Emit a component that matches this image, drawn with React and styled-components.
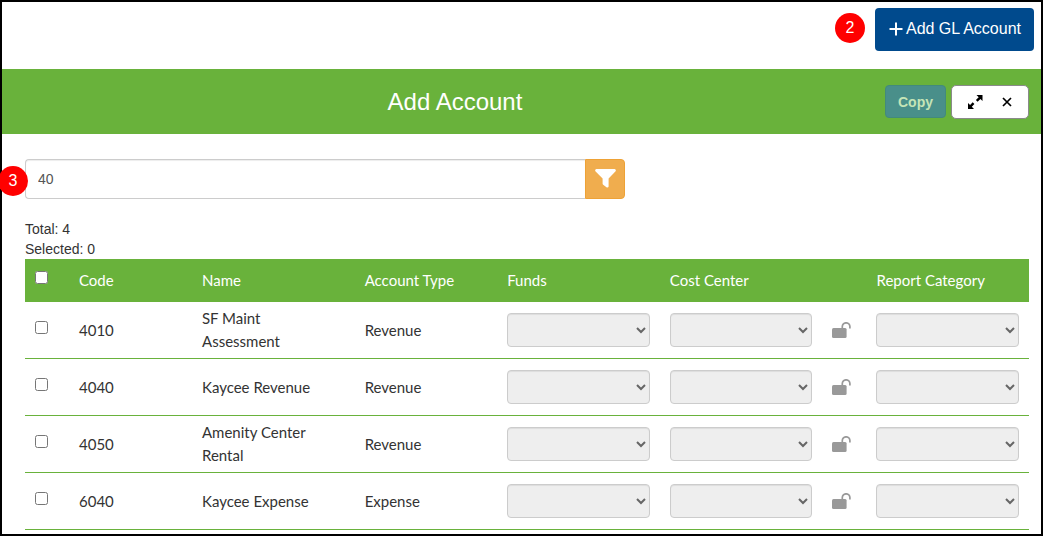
import React, { useState } from "react";
import styled, { createGlobalStyle } from "styled-components";

const GlobalStyle = createGlobalStyle`
  * {
    box-sizing: border-box;
  }

  body {
    margin: 0;
    background: #fff;
    color: #333;
    font: 14px/20px "Liberation Sans", Arial, sans-serif;
  }
`;

const Frame = styled.div`
  min-height: 100vh;
  border: 2px solid #000;
`;

const TopBar = styled.div`
  display: flex;
  justify-content: flex-end;
  align-items: flex-start;
  gap: 10px;
  padding: 6px 7px 18px;
`;

const StepBadge = styled.span`
  display: flex;
  align-items: center;
  justify-content: center;
  width: 30px;
  height: 30px;
  margin-top: 5px;
  border-radius: 50%;
  background: #f00;
  color: #fff;
  font-size: 16px;
`;

const FloatingBadge = styled(StepBadge)`
  position: absolute;
  top: 7px;
  left: -27px;
  margin: 0;
`;

const AddButton = styled.button`
  display: flex;
  align-items: center;
  gap: 3px;
  height: 43px;
  padding: 0 13px 2px 14px;
  border: 0;
  border-radius: 4px;
  background: #004a8d;
  color: #fff;
  font: 16px/20px "Liberation Sans", Arial, sans-serif;
`;

const Header = styled.header`
  display: flex;
  align-items: center;
  gap: 5px;
  min-height: 65px;
  padding: 0 12px 0 28px;
  background: #69b23b;
`;

const Title = styled.h1`
  flex: 1;
  margin: 0;
  color: #fff;
  font-size: 24px;
  font-weight: normal;
  line-height: 28px;
  text-align: center;
`;

const CopyButton = styled.button`
  height: 33px;
  padding: 0 12px;
  border: 1px solid #428a7c;
  border-radius: 4px;
  background: #498f8a;
  color: #c5e5b7;
  font: bold 14px/20px "Liberation Sans", Arial, sans-serif;
`;

const WindowControls = styled.div`
  display: flex;
  width: 78px;
  height: 34px;
  padding: 0 5px 0 7px;
  border: 1px solid #8a8a8a;
  border-radius: 5px;
  background: #fff;
`;

const ControlButton = styled.button`
  display: flex;
  flex: 1;
  align-items: center;
  justify-content: center;
  padding: 0;
  border: 0;
  background: none;
  color: #000;
`;

const Content = styled.main`
  padding: 25px 12px 4px 23px;
`;

const SearchGroup = styled.div`
  position: relative;
  display: flex;
  max-width: 600px;
  height: 40px;
  margin-bottom: 20px;
`;

const SearchInput = styled.input`
  flex: 1;
  min-width: 0;
  padding: 6px 12px;
  border: 1px solid #ccc;
  border-right: 0;
  border-radius: 4px 0 0 4px;
  box-shadow: inset 0 1px 1px rgba(0, 0, 0, 0.075);
  color: #555;
  font: 14px/20px "Liberation Sans", Arial, sans-serif;
`;

const FilterButton = styled.button`
  display: flex;
  align-items: center;
  justify-content: center;
  width: 40px;
  padding: 0 0 2px;
  border: 1px solid #eea236;
  border-radius: 0 4px 4px 0;
  background: #f0ad4e;
  color: #fff;
`;

const AccountTable = styled.table`
  width: 100%;
  table-layout: fixed;
  border-collapse: separate;
  border-spacing: 0;
  font: 15px/23px Lato, "Noto Sans", sans-serif;
`;

const Col = styled.col`
  width: ${(p) => p.$width};
`;

const HeadCell = styled.th`
  height: 43px;
  padding: 0 10px;
  background: #69b23b;
  color: #fff;
  font-weight: normal;
  text-align: left;
  white-space: nowrap;
`;

const Cell = styled.td`
  height: 57px;
  padding: 5px 10px;
  border-bottom: 1px solid #69b23b;
`;

const NameCell = styled(Cell)`
  padding-right: 20px;
`;

const Checkbox = styled.input`
  display: block;
  width: 13px;
  height: 13px;
  margin: 0 0 6px;
`;

const Select = styled.select`
  display: block;
  width: 100%;
  height: 34px;
  border: 1px solid #ccc;
  border-radius: 4px;
  background: #eee;
  box-shadow: inset 0 1px 1px rgba(0, 0, 0, 0.075);
  color: #666;
  font: 14px/20px "Liberation Sans", Arial, sans-serif;
  opacity: 1;
`;

const LockButton = styled.button`
  display: block;
  padding: 0;
  border: 0;
  background: none;
  color: #999;

  svg {
    display: block;
  }
`;

const PlusIcon = () => (
  <svg width="14" height="14" viewBox="0 0 14 14" aria-hidden="true">
    <path d="M7 .5v13M.5 7h13" stroke="currentColor" strokeWidth="2" />
  </svg>
);

const ExpandIcon = () => (
  <svg width="15" height="14" viewBox="0 0 15 14" aria-hidden="true">
    <path d="M8.5 0H14.5V6L12.4 4.1 9.6 6.7 7.9 5 10.7 2.3Z" />
    <path d="M6 14H0V8L2.1 9.9 4.7 7.3 6.4 9 3.8 11.7Z" />
  </svg>
);

const CloseIcon = () => (
  <svg width="10" height="10" viewBox="0 0 10 10" aria-hidden="true">
    <path d="M1 1l8 8M9 1L1 9" stroke="currentColor" strokeWidth="1.7" />
  </svg>
);

const FilterIcon = () => (
  <svg width="21" height="19" viewBox="0 0 21 19" aria-hidden="true">
    <path
      d="M1.4 0H19.6Q21.4 .6 20.6 2.2L13.6 9.4V17.4Q13.2 19 11.8 18.4L8.2 15.8Q7.6 15.2 7.6 14.5V9.4L.4 2.2Q-.4 .6 1.4 0Z"
      fill="currentColor"
    />
  </svg>
);

const UnlockIcon = () => (
  <svg width="19" height="16" viewBox="0 0 19 16" aria-hidden="true">
    <rect y="6" width="14.6" height="10" rx="1.5" fill="currentColor" />
    <path
      d="M10.3 6.5V4.6a3.8 3.8 0 0 1 7.6 0v2"
      fill="none"
      stroke="currentColor"
      strokeWidth="1.7"
    />
  </svg>
);

const accounts = [
  { code: "4010", name: "SF Maint Assessment", type: "Revenue" },
  { code: "4040", name: "Kaycee Revenue", type: "Revenue" },
  { code: "4050", name: "Amenity Center Rental", type: "Revenue" },
  { code: "6040", name: "Kaycee Expense", type: "Expense" },
];

const AccountRow = ({ account, checked, onToggle }) => (
  <tr>
    <Cell>
      <Checkbox
        type="checkbox"
        aria-label={`Select ${account.code}`}
        checked={checked}
        onChange={onToggle}
      />
    </Cell>
    <Cell>{account.code}</Cell>
    <NameCell>{account.name}</NameCell>
    <Cell>{account.type}</Cell>
    <Cell>
      <Select aria-label="Funds" disabled={!checked} />
    </Cell>
    <Cell>
      <Select aria-label="Cost Center" disabled={!checked} />
    </Cell>
    <Cell>
      <LockButton type="button" aria-label="Unlocked">
        <UnlockIcon />
      </LockButton>
    </Cell>
    <Cell>
      <Select aria-label="Report Category" disabled={!checked} />
    </Cell>
  </tr>
);

const App = () => {
  const [search, setSearch] = useState("40");
  const [selected, setSelected] = useState([]);

  const toggle = (code) =>
    setSelected((prev) =>
      prev.includes(code) ? prev.filter((c) => c !== code) : [...prev, code]
    );

  const toggleAll = () =>
    setSelected(
      selected.length === accounts.length ? [] : accounts.map((a) => a.code)
    );

  return (
    <Frame>
      <GlobalStyle />
      <TopBar>
        <StepBadge>2</StepBadge>
        <AddButton type="button">
          <PlusIcon />
          Add GL Account
        </AddButton>
      </TopBar>
      <Header>
        <Title>Add Account</Title>
        <CopyButton type="button" disabled={selected.length === 0}>
          Copy
        </CopyButton>
        <WindowControls>
          <ControlButton type="button" aria-label="Expand">
            <ExpandIcon />
          </ControlButton>
          <ControlButton type="button" aria-label="Close">
            <CloseIcon />
          </ControlButton>
        </WindowControls>
      </Header>
      <Content>
        <SearchGroup>
          <SearchInput
            type="text"
            aria-label="Search accounts"
            value={search}
            onChange={(e) => setSearch(e.target.value)}
          />
          <FilterButton type="button" aria-label="Filter">
            <FilterIcon />
          </FilterButton>
          <FloatingBadge>3</FloatingBadge>
        </SearchGroup>
        <div>Total: {accounts.length}</div>
        <div>Selected: {selected.length}</div>
        <AccountTable>
          <colgroup>
            <Col $width="44px" />
            <Col $width="12.25%" />
            <Col $width="16.2%" />
            <Col $width="14.2%" />
            <Col $width="16.2%" />
            <Col $width="16.2%" />
            <Col $width="44px" />
            <Col $width="auto" />
          </colgroup>
          <thead>
            <tr>
              <HeadCell>
                <Checkbox
                  type="checkbox"
                  aria-label="Select all"
                  checked={selected.length === accounts.length}
                  onChange={toggleAll}
                />
              </HeadCell>
              <HeadCell>Code</HeadCell>
              <HeadCell>Name</HeadCell>
              <HeadCell>Account Type</HeadCell>
              <HeadCell>Funds</HeadCell>
              <HeadCell>Cost Center</HeadCell>
              <HeadCell />
              <HeadCell>Report Category</HeadCell>
            </tr>
          </thead>
          <tbody>
            {accounts.map((account) => (
              <AccountRow
                key={account.code}
                account={account}
                checked={selected.includes(account.code)}
                onToggle={() => toggle(account.code)}
              />
            ))}
          </tbody>
        </AccountTable>
      </Content>
    </Frame>
  );
};

export default App;
